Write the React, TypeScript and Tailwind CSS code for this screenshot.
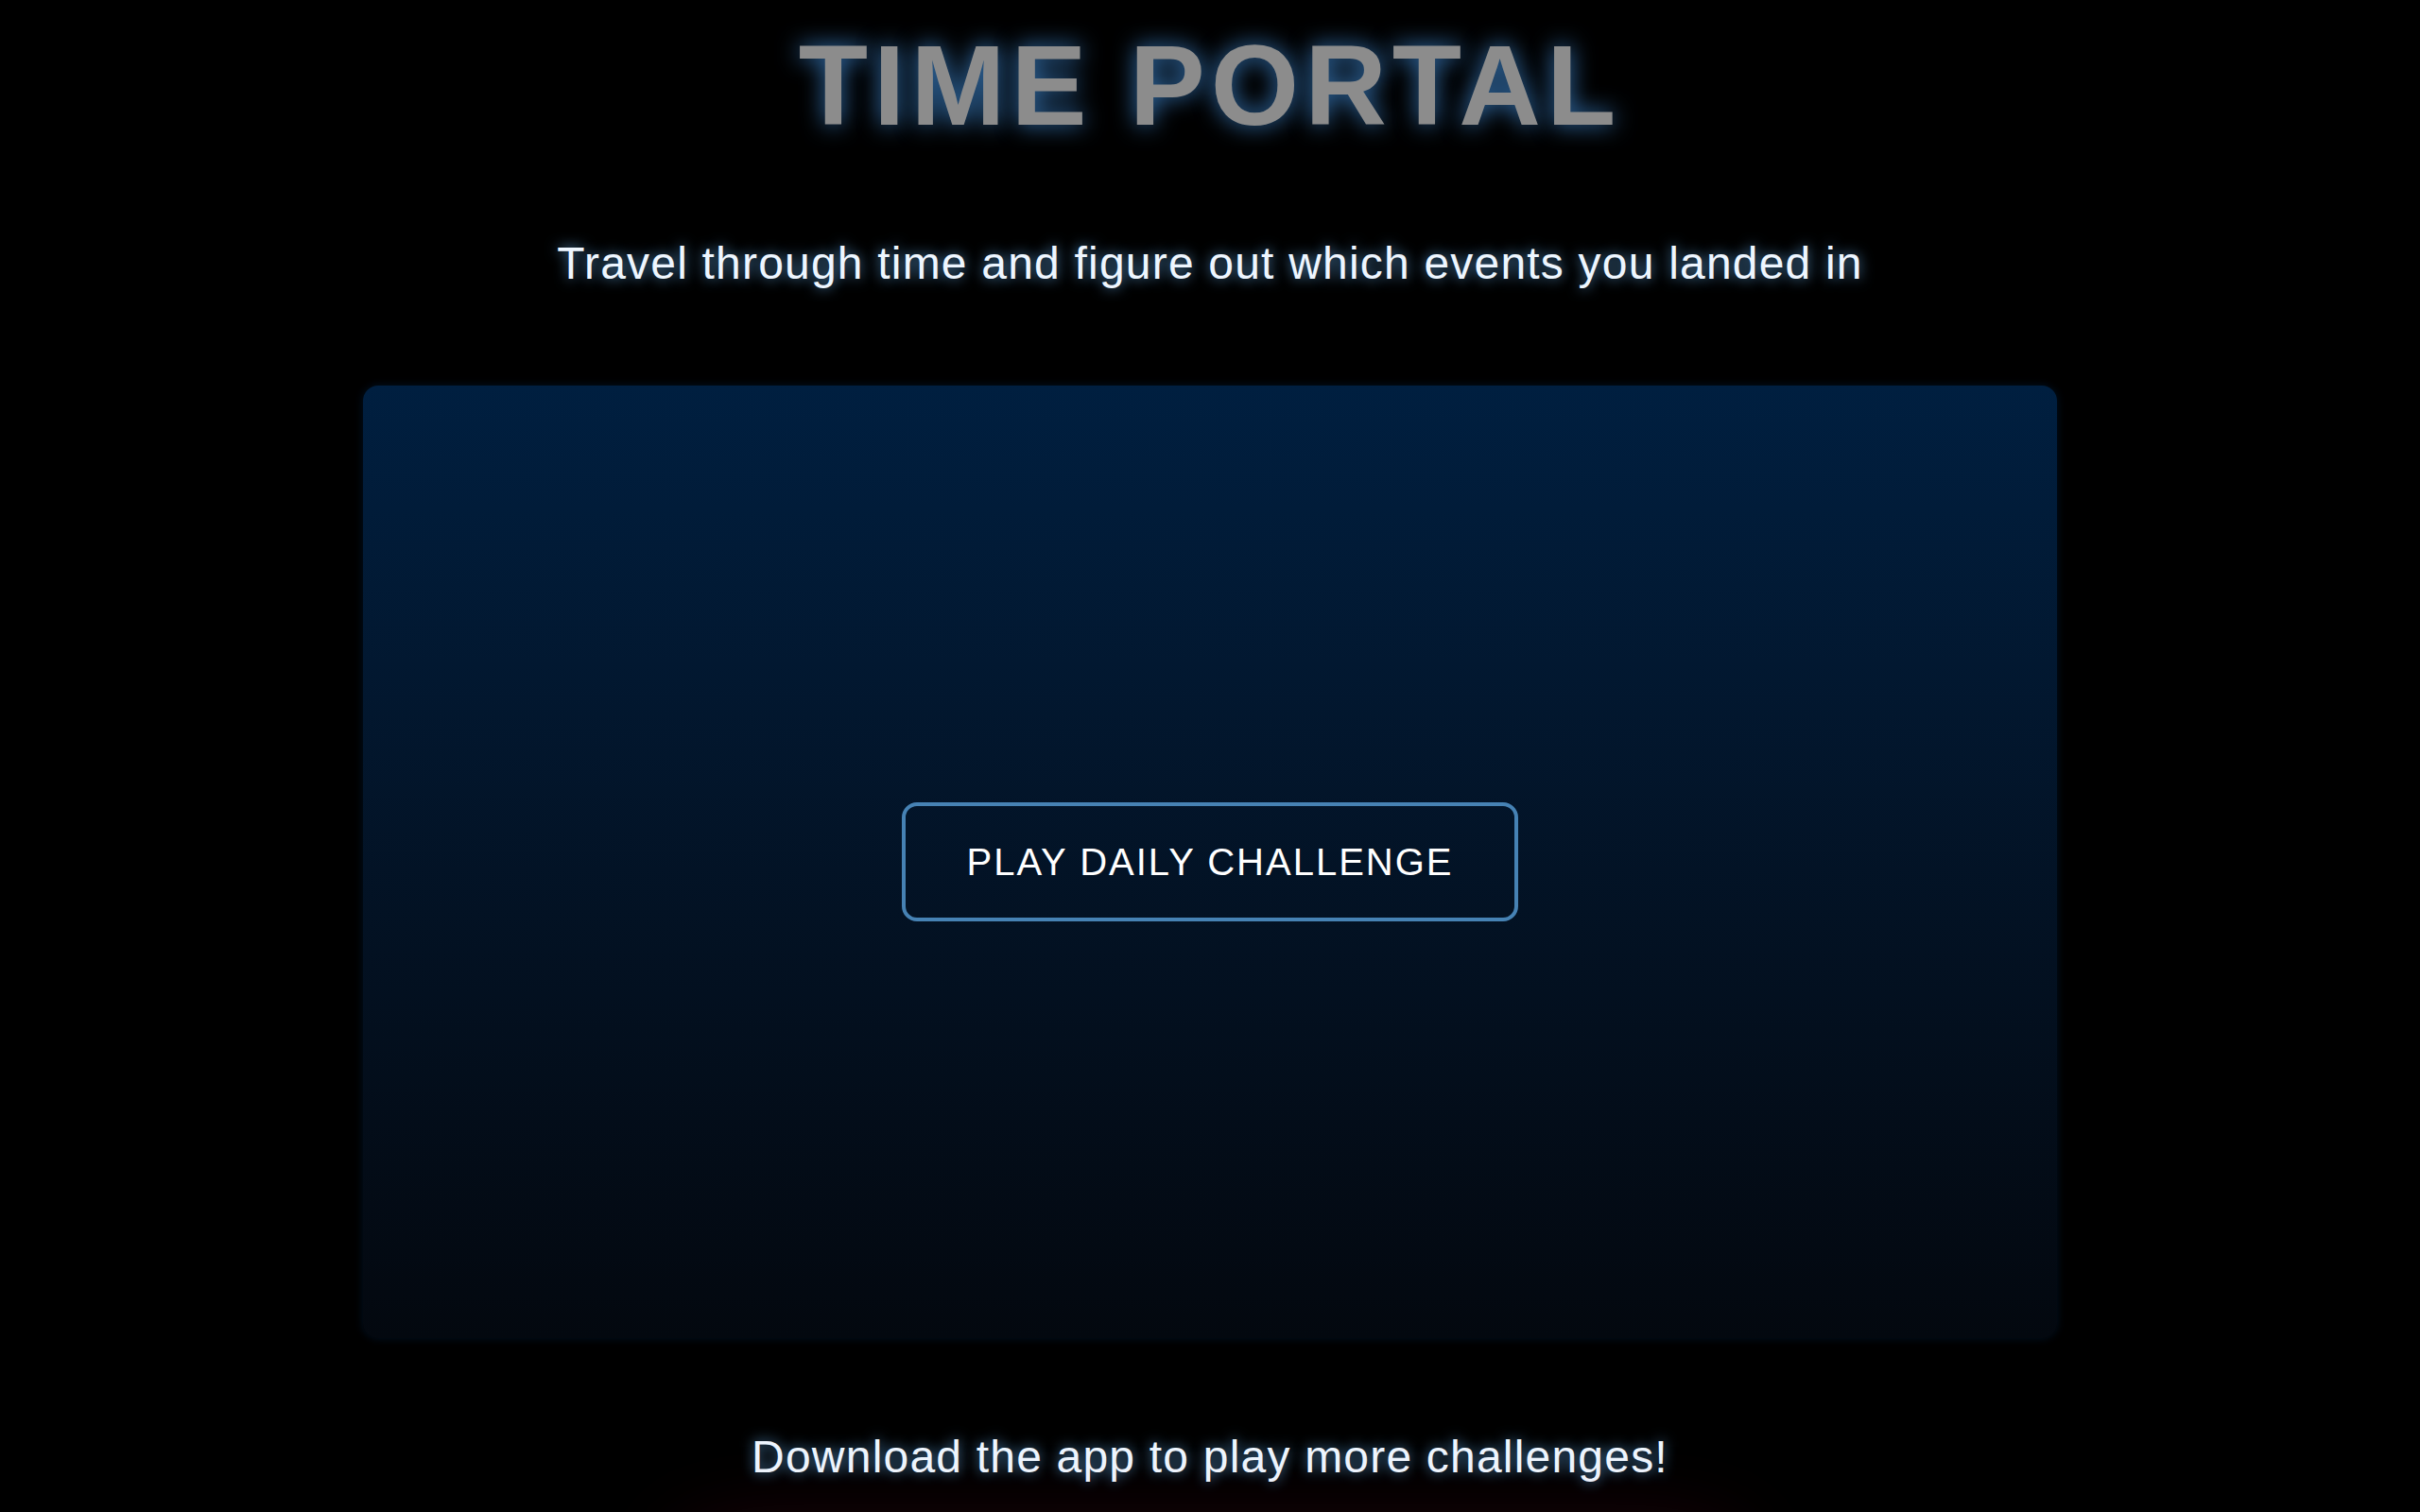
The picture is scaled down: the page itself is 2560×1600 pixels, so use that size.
import React from 'react';

const glow = '[text-shadow:0_0_14px_rgba(100,170,230,0.85)]';

export default function App() {
  return (
    <div className="h-screen overflow-hidden bg-black font-['Liberation_Sans',Arial,sans-serif] flex flex-col items-center">
      <h1 className="pt-[30px] text-[120px] leading-[120px] font-bold tracking-wider text-[#8c8c8c] [text-shadow:0_0_24px_rgba(60,130,200,0.9)]">
        TIME PORTAL
      </h1>

      <p className={`mt-[97px] text-[48px] leading-[64px] tracking-wide text-[#eef6ff] ${glow}`}>
        Travel through time and figure out which events you landed in
      </p>

      <div className="mt-[97px] w-[70%] aspect-video shrink-0 rounded-2xl bg-gradient-to-b from-[#001f40] to-[#03080f] shadow-[0_0_10px_rgba(0,40,80,0.45)] flex items-center justify-center">
        <button className="px-[64px] py-[31px] rounded-2xl border-4 border-[#4682b4] bg-transparent text-white text-[40px] leading-[56px] tracking-wider">
          PLAY DAILY CHALLENGE
        </button>
      </div>

      <p className={`mt-[94px] text-[48px] leading-[64px] tracking-wide text-[#eef6ff] ${glow}`}>
        Download the app to play more challenges!
      </p>

      <div className="mt-[60px] w-[1100px] h-[120px] shrink-0 rounded-2xl bg-black shadow-[0_0_100px_rgba(200,20,60,0.25)]" />
    </div>
  );
}
